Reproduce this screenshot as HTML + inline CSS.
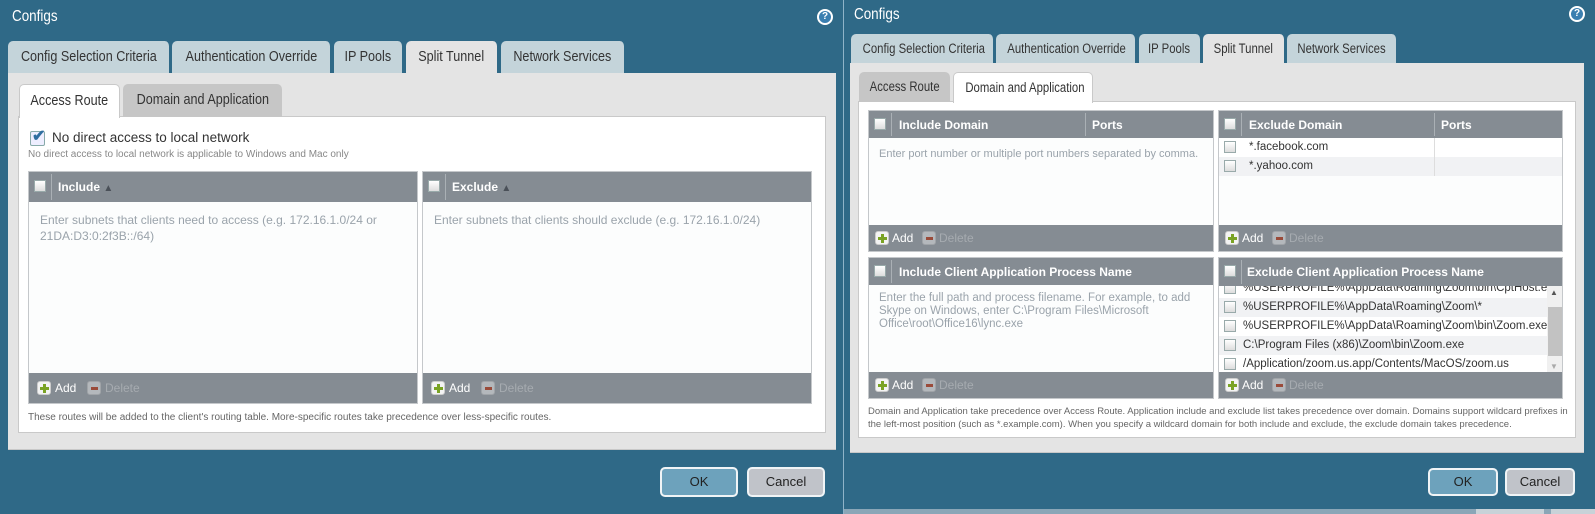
<!DOCTYPE html>
<html><head><meta charset="utf-8"><style>
*{box-sizing:border-box;margin:0;padding:0}
body{width:1595px;height:514px;overflow:hidden;background:#2f6987;position:relative;font-family:"Liberation Sans",sans-serif}
.a{position:absolute}
.n{display:inline-block;transform:scaleX(.84);transform-origin:center;white-space:nowrap}
.title{color:#fff;font-size:16px}
.help{width:16px;height:16px;border-radius:50%;background:#fff;border:2px solid #fff;}
.help::after{content:"?";position:absolute;left:0;top:0;width:12px;height:12px;border-radius:50%;background:#3b7fb0;color:#fff;font:bold 10px/12px "Liberation Sans",sans-serif;text-align:center}
.tab{background:#c4d4da;border-radius:5px 5px 0 0;font-size:15px;color:#333;text-align:center;border-right:1px solid #2f6987;white-space:nowrap;overflow:hidden}
.tab.on{background:#e4e4e4}
.r .tab,.r .itab{font-size:13.5px}
.gray{background:#e4e4e4;border-bottom:1px solid #c8c8c8}
.white{background:#fff;border:1px solid #c9c9c9}
.itab{background:#c6c6c6;border-radius:5px 5px 0 0;font-size:15px;color:#333;text-align:center;white-space:nowrap;overflow:hidden}
.itab.on{background:#fff;border:1px solid #c9c9c9;border-bottom:none}
.grid{background:#fcfdfd;border:1px solid #c5c8cb}
.hdr{position:absolute;left:0;right:0;top:0;background:#858c93;color:#fff;font-size:12px;font-weight:bold}
.cb{position:absolute;width:12px;height:12px;background:linear-gradient(#fff,#ddd);border:1px solid #9aa;}
.hdr .sep{position:absolute;top:2px;bottom:2px;width:1px;background:#aab0b5}
.ftr{position:absolute;left:0;right:0;bottom:0;background:#858c93;color:#fff;font-size:12px}
.plus,.minus{position:absolute;width:14px;height:14px;border-radius:3px;background:#f3f3f3;border:1px solid #ccc}
.plus::before{content:"";position:absolute;left:5px;top:2px;width:3px;height:9px;background:#7aa324}
.plus::after{content:"";position:absolute;left:2px;top:5px;width:9px;height:3px;background:#7aa324}
.minus{background:#b4b8bc;border-color:#a0a4a8}
.minus::after{content:"";position:absolute;left:3px;top:5px;width:7px;height:3px;background:#9a4b3a}
.ph{color:#9aa3ab;font-size:12px;line-height:16px}
.note{color:#666;font-size:10px;line-height:13px}
.btn{border:2px solid #f0f4f6;border-radius:5px;font-size:13px;color:#222;text-align:center}
.row{position:absolute;left:0;height:19px;font-size:11.5px;color:#333;line-height:19px;white-space:nowrap}
</style></head><body>

<!-- LEFT DIALOG -->
<div class="a title" style="left:12px;top:8px"><span class="n" style="transform-origin:left">Configs</span></div>
<div class="a help" style="left:817px;top:9px"></div>
<div class="a tab" style="left:8px;top:41px;width:162px;height:32px;line-height:32px"><span class="n">Config Selection Criteria</span></div>
<div class="a tab" style="left:172px;top:41px;width:159px;height:32px;line-height:32px"><span class="n">Authentication Override</span></div>
<div class="a tab" style="left:334px;top:41px;width:69px;height:32px;line-height:32px"><span class="n">IP Pools</span></div>
<div class="a tab on" style="left:406px;top:41px;width:92px;height:32px;line-height:32px"><span class="n">Split Tunnel</span></div>
<div class="a tab" style="left:501px;top:41px;width:124px;height:32px;line-height:32px"><span class="n">Network Services</span></div>
<div class="a gray" style="left:8px;top:73px;width:828px;height:377px"></div>
<div class="a white" style="left:18px;top:116px;width:808px;height:317px"></div>
<div class="a itab on" style="left:19px;top:84px;width:101px;height:34px;line-height:32px"><span class="n">Access Route</span></div>
<div class="a itab" style="left:123px;top:84px;width:159px;height:33px;line-height:32px"><span class="n">Domain and Application</span></div>
<div class="a" style="left:30px;top:131px;width:15px;height:15px;border:1px solid #8aa;border-radius:2px;background:#eef;"></div>
<div class="a" style="left:32px;top:126px;color:#2f6ea0;font-size:16px;font-weight:bold">✔</div>
<div class="a" style="left:52px;top:130px;font-size:13.5px;color:#333">No direct access to local network</div>
<div class="a note" style="left:28px;top:148px;color:#888">No direct access to local network is applicable to Windows and Mac only</div>

<div class="a grid" style="left:28px;top:171px;width:390px;height:233px">
 <div class="hdr" style="height:30px"><div class="cb" style="left:5px;top:8px"></div><div class="sep" style="left:22px"></div><span class="a" style="left:29px;top:8px">Include <span style="color:#4a5058;font-size:10px">▲</span></span></div>
 <div class="a ph" style="left:11px;top:40px;width:370px">Enter subnets that clients need to access (e.g. 172.16.1.0/24 or 21DA:D3:0:2f3B::/64)</div>
 <div class="ftr" style="height:30px"><div class="plus" style="left:8px;top:8px"></div><span class="a" style="left:26px;top:8px">Add</span><div class="minus" style="left:58px;top:8px"></div><span class="a" style="left:76px;top:8px;color:#a6abb0">Delete</span></div>
</div>
<div class="a grid" style="left:422px;top:171px;width:390px;height:233px">
 <div class="hdr" style="height:30px"><div class="cb" style="left:5px;top:8px"></div><div class="sep" style="left:22px"></div><span class="a" style="left:29px;top:8px">Exclude <span style="color:#4a5058;font-size:10px">▲</span></span></div>
 <div class="a ph" style="left:11px;top:40px;width:370px">Enter subnets that clients should exclude (e.g. 172.16.1.0/24)</div>
 <div class="ftr" style="height:30px"><div class="plus" style="left:8px;top:8px"></div><span class="a" style="left:26px;top:8px">Add</span><div class="minus" style="left:58px;top:8px"></div><span class="a" style="left:76px;top:8px;color:#a6abb0">Delete</span></div>
</div>
<div class="a note" style="left:28px;top:411px">These routes will be added to the client's routing table. More-specific routes take precedence over less-specific routes.</div>
<div class="a btn" style="left:660px;top:467px;width:78px;height:30px;line-height:26px;background:#6da2bc">OK</div>
<div class="a btn" style="left:747px;top:467px;width:78px;height:30px;line-height:26px;background:#c0c3c9">Cancel</div>

<!-- divider -->
<div class="a" style="left:843px;top:0;width:1px;height:514px;background:#8fb3c8"></div>

<!-- RIGHT DIALOG -->
<div class="r">
<div class="a title" style="left:854px;top:6px"><span class="n" style="transform-origin:left">Configs</span></div>
<div class="a help" style="left:1569px;top:6px"></div>
<div class="a tab" style="left:851px;top:34px;width:143px;height:29px;line-height:29px"><span class="n">Config Selection Criteria</span></div>
<div class="a tab" style="left:996px;top:34px;width:140px;height:29px;line-height:29px"><span class="n">Authentication Override</span></div>
<div class="a tab" style="left:1139px;top:34px;width:62px;height:29px;line-height:29px"><span class="n">IP Pools</span></div>
<div class="a tab on" style="left:1203px;top:34px;width:82px;height:29px;line-height:29px"><span class="n">Split Tunnel</span></div>
<div class="a tab" style="left:1287px;top:34px;width:110px;height:29px;line-height:29px"><span class="n">Network Services</span></div>
<div class="a gray" style="left:850px;top:63px;width:734px;height:390px"></div>
<div class="a white" style="left:858px;top:101px;width:718px;height:337px"></div>
<div class="a itab" style="left:859px;top:72px;width:91px;height:30px;line-height:30px"><span class="n">Access Route</span></div>
<div class="a itab on" style="left:953px;top:72px;width:140px;height:31px;line-height:30px"><span class="n">Domain and Application</span></div>
</div>

<div class="a grid" style="left:868px;top:110px;width:346px;height:142px">
 <div class="hdr" style="height:27px"><div class="cb" style="left:5px;top:7px"></div><div class="sep" style="left:22px"></div><span class="a" style="left:30px;top:7px">Include Domain</span><div class="sep" style="left:216px"></div><span class="a" style="left:223px;top:7px">Ports</span></div>
 <div class="a ph" style="left:10px;top:35px;width:330px;white-space:nowrap;font-size:11px">Enter port number or multiple port numbers separated by comma.</div>
 <div class="ftr" style="height:26px"><div class="plus" style="left:6px;top:6px"></div><span class="a" style="left:23px;top:6px">Add</span><div class="minus" style="left:53px;top:6px"></div><span class="a" style="left:70px;top:6px;color:#a6abb0">Delete</span></div>
</div>
<div class="a grid" style="left:1218px;top:110px;width:345px;height:142px">
 <div class="hdr" style="height:27px"><div class="cb" style="left:5px;top:7px"></div><div class="sep" style="left:22px"></div><span class="a" style="left:30px;top:7px">Exclude Domain</span><div class="sep" style="left:215px"></div><span class="a" style="left:222px;top:7px">Ports</span></div>
 <div class="row" style="top:27px;width:343px;background:#fff"><div class="cb" style="left:5px;top:3px"></div><span class="a" style="left:30px">*.facebook.com</span><div class="a" style="left:215px;top:0;width:1px;height:19px;background:#ddd"></div></div>
 <div class="row" style="top:46px;width:343px;background:#f1f2f4"><div class="cb" style="left:5px;top:3px"></div><span class="a" style="left:30px">*.yahoo.com</span><div class="a" style="left:215px;top:0;width:1px;height:19px;background:#ddd"></div></div>
 <div class="ftr" style="height:26px"><div class="plus" style="left:6px;top:6px"></div><span class="a" style="left:23px;top:6px">Add</span><div class="minus" style="left:53px;top:6px"></div><span class="a" style="left:70px;top:6px;color:#a6abb0">Delete</span></div>
</div>

<div class="a grid" style="left:868px;top:257px;width:346px;height:142px">
 <div class="hdr" style="height:27px"><div class="cb" style="left:5px;top:7px"></div><div class="sep" style="left:22px"></div><span class="a" style="left:30px;top:7px">Include Client Application Process Name</span></div>
 <div class="a ph" style="left:10px;top:34px;width:330px;font-size:11.5px;line-height:13px">Enter the full path and process filename. For example, to add Skype on Windows, enter C:\Program Files\Microsoft Office\root\Office16\lync.exe</div>
 <div class="ftr" style="height:26px"><div class="plus" style="left:6px;top:6px"></div><span class="a" style="left:23px;top:6px">Add</span><div class="minus" style="left:53px;top:6px"></div><span class="a" style="left:70px;top:6px;color:#a6abb0">Delete</span></div>
</div>
<div class="a grid" style="left:1218px;top:257px;width:345px;height:142px;overflow:hidden">
 <div class="row" style="top:21px;width:328px;background:#fff"><div class="cb" style="left:5px;top:3px"></div><span class="a" style="left:24px">%USERPROFILE%\AppData\Roaming\Zoom\bin\CptHost.exe</span></div>
 <div class="row" style="top:40px;width:328px;background:#f1f2f4"><div class="cb" style="left:5px;top:3px"></div><span class="a" style="left:24px">%USERPROFILE%\AppData\Roaming\Zoom\*</span></div>
 <div class="row" style="top:59px;width:328px;background:#fff"><div class="cb" style="left:5px;top:3px"></div><span class="a" style="left:24px">%USERPROFILE%\AppData\Roaming\Zoom\bin\Zoom.exe</span></div>
 <div class="row" style="top:78px;width:328px;background:#f1f2f4"><div class="cb" style="left:5px;top:3px"></div><span class="a" style="left:24px">C:\Program Files (x86)\Zoom\bin\Zoom.exe</span></div>
 <div class="row" style="top:97px;width:328px;background:#fff"><div class="cb" style="left:5px;top:3px"></div><span class="a" style="left:24px">/Application/zoom.us.app/Contents/MacOS/zoom.us</span></div>
 <div class="a" style="left:328px;top:27px;width:16px;height:89px;background:#f0f0f0"></div>
 <div class="a" style="left:329px;top:49px;width:14px;height:49px;background:#c2c2c2"></div>
 <div class="a" style="left:331px;top:30px;font-size:8px;color:#555">▲</div>
 <div class="a" style="left:331px;top:104px;font-size:8px;color:#aaa">▼</div>
 <div class="hdr" style="height:28px"><div class="cb" style="left:5px;top:7px"></div><div class="sep" style="left:22px"></div><span class="a" style="left:28px;top:7px">Exclude Client Application Process Name</span></div>
 <div class="ftr" style="height:26px"><div class="plus" style="left:6px;top:6px"></div><span class="a" style="left:23px;top:6px">Add</span><div class="minus" style="left:53px;top:6px"></div><span class="a" style="left:70px;top:6px;color:#a6abb0">Delete</span></div>
</div>
<div class="a note" style="left:868px;top:405px;width:700px;font-size:9.5px">Domain and Application take precedence over Access Route. Application include and exclude list takes precedence over domain. Domains support wildcard prefixes in the left-most position (such as *.example.com). When you specify a wildcard domain for both include and exclude, the exclude domain takes precedence.</div>
<div class="a btn" style="left:1428px;top:468px;width:70px;height:28px;line-height:24px;background:#6da2bc">OK</div>
<div class="a btn" style="left:1505px;top:468px;width:70px;height:28px;line-height:24px;background:#c0c3c9">Cancel</div>
<div class="a" style="left:844px;top:509px;width:751px;height:5px;background:#8aa6b7"></div>
<div class="a" style="left:1476px;top:509px;width:68px;height:5px;background:#c8d2d8"></div>
<div class="a" style="left:1551px;top:509px;width:44px;height:5px;background:#c8d2d8"></div>
</body></html>
